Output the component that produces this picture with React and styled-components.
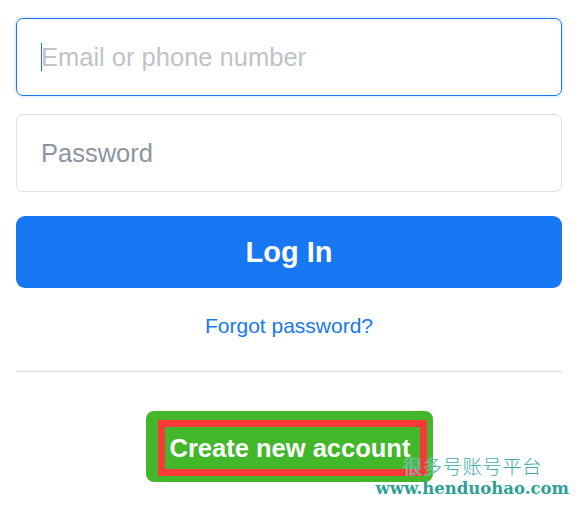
import React from "react";
import styled, { createGlobalStyle } from "styled-components";

const Global = createGlobalStyle`
  html, body { margin: 0; padding: 0; background: #ffffff; }
  body { font-family: "Liberation Sans", Arial, sans-serif; }
`;

const Page = styled.div`
  position: relative;
  width: 582px;
  height: 510px;
  overflow: hidden;
  box-sizing: border-box;
  padding: 18px 20px 0 16px;
  display: flex;
  flex-direction: column;
`;

const Field = styled.div`
  box-sizing: border-box;
  height: 78px;
  border: 1px solid ${(p) => (p.$focused ? "#1877f2" : "#dddfe2")};
  border-radius: 7px;
  box-shadow: ${(p) => (p.$focused ? "0 0 0 2px #e7f3ff" : "none")};
  padding: 0 24px;
  display: flex;
  align-items: center;
  font-size: 25.5px;
  color: ${(p) => (p.$focused ? "#bec3c9" : "#8d949e")};
  margin-bottom: ${(p) => p.$mb}px;
`;

const Caret = styled.span`
  display: inline-block;
  width: 1px;
  height: 28px;
  background: #1877f2;
  margin-right: -1px;
  align-self: center;
`;

const LoginButton = styled.button`
  box-sizing: border-box;
  height: 72px;
  margin-top: 24px;
  border: none;
  border-radius: 9px;
  background: #1877f2;
  color: #ffffff;
  font-family: "Liberation Sans", Arial, sans-serif;
  font-weight: bold;
  font-size: 29px;
  display: flex;
  align-items: center;
  justify-content: center;
  padding: 0;
`;

const ForgotLink = styled.a`
  display: block;
  margin-top: 25px;
  text-align: center;
  font-size: 21px;
  line-height: 26px;
  color: #1877f2;
  text-decoration: none;
`;

const Divider = styled.hr`
  margin: 32px 0 0;
  border: none;
  height: 1px;
  background: #dadde1;
`;

const CreateRow = styled.div`
  display: flex;
  justify-content: center;
  margin-top: 39px;
`;

const CreateButton = styled.button`
  box-sizing: border-box;
  width: 287px;
  height: 71px;
  border: none;
  border-radius: 8px;
  background: #42b72a;
  padding: 9px 6px 6px 12px;
  display: flex;
  align-items: stretch;
`;

const Highlight = styled.span`
  box-sizing: border-box;
  flex: 1;
  border: 7px solid #fa3838;
  display: flex;
  align-items: center;
  padding: 0 0 0 5px;
  color: #ffffff;
  font-family: "Liberation Sans", Arial, sans-serif;
  font-weight: bold;
  font-size: 25.5px;
  white-space: nowrap;
`;

const Watermark = styled.div`
  position: absolute;
  right: 13px;
  bottom: 10px;
  display: flex;
  flex-direction: column;
  align-items: flex-end;
  pointer-events: none;
`;

const WatermarkCn = styled.div`
  margin-right: 27px;
  font-family: "Noto Sans CJK SC", sans-serif;
  font-size: 19.5px;
  font-weight: 300;
  line-height: 24px;
  letter-spacing: 0.4px;
  color: #3aaea6;
  text-shadow: 0 0 1px #ffffff;
`;

const WatermarkUrl = styled.div`
  font-family: "DejaVu Serif", serif;
  font-weight: bold;
  font-size: 16.5px;
  line-height: 22px;
  color: #2e9f97;
`;

export default function App() {
  return (
    <>
      <Global />
      <Page>
        <Field $focused $mb={18}>
          <Caret />
          Email or phone number
        </Field>
        <Field $mb={0}>Password</Field>
        <LoginButton>Log In</LoginButton>
        <ForgotLink href="#">Forgot password?</ForgotLink>
        <Divider />
        <CreateRow>
          <CreateButton>
            <Highlight>Create new account</Highlight>
          </CreateButton>
        </CreateRow>
        <Watermark>
          <WatermarkCn>很多号账号平台</WatermarkCn>
          <WatermarkUrl>www.henduohao.com</WatermarkUrl>
        </Watermark>
      </Page>
    </>
  );
}
